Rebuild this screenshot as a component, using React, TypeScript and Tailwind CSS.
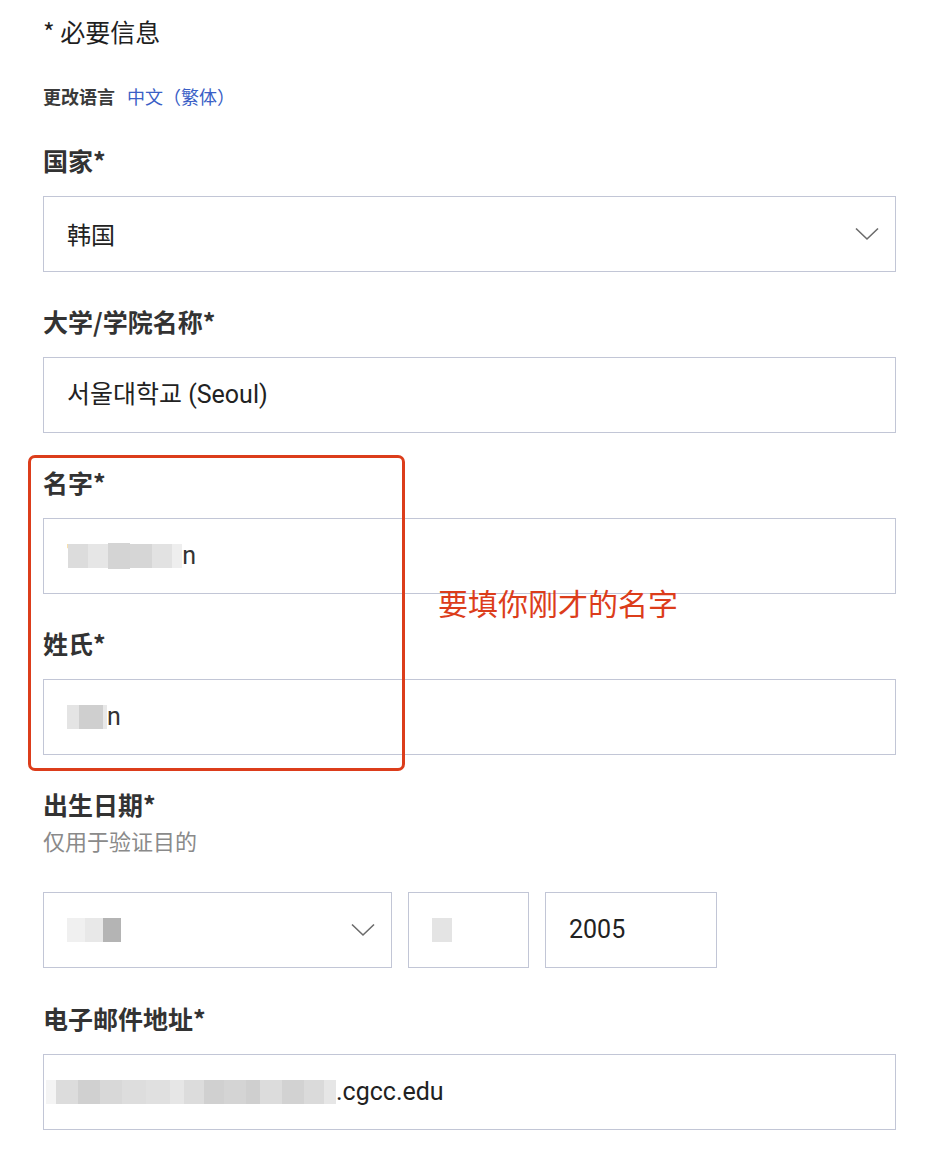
import React from "react";

const cjk = { fontFamily: "'Noto Sans CJK SC', 'Noto Sans', sans-serif" };
const latin = { fontFamily: "Roboto, 'Noto Sans CJK KR', 'Noto Sans CJK SC', sans-serif" };

function Chevron() {
  return (
    <svg width="24" height="14" viewBox="0 0 24 14" fill="none" className="shrink-0">
      <path d="M1 1.5 L12 12 L23 1.5" stroke="#6b6b6b" strokeWidth="1.6" />
    </svg>
  );
}

// pixelated privacy blur over personal values
function Blur({ blocks }: { blocks: { w: number; c: string; h?: number; y?: number }[] }) {
  return (
    <span className="inline-flex items-center blur-[0.6px]">
      {blocks.map((b, i) => (
        <span
          key={i}
          className="inline-block"
          style={{ width: b.w, height: b.h ?? 24, background: b.c, marginTop: b.y ?? 0 }}
        />
      ))}
    </span>
  );
}

function Label({ children }: { children: React.ReactNode }) {
  return (
    <div className="text-[25px] leading-[30px] font-bold text-[#333333] mb-[21px]" style={cjk}>
      {children}
    </div>
  );
}

function Box({
  children,
  className = "",
  chevron = false,
}: {
  children?: React.ReactNode;
  className?: string;
  chevron?: boolean;
}) {
  return (
    <div
      className={`h-[76px] border-[1.5px] border-[#c2c6d6] bg-white flex items-center pl-[23px] pr-[16px] text-[25px] text-[#222222] ${className}`}
      style={latin}
    >
      <div className="flex-1 flex items-center">{children}</div>
      {chevron && <Chevron />}
    </div>
  );
}

export default function App() {
  return (
    <div className="min-h-[1160px] bg-white pl-[43px] pr-[51px] pt-[15px]" style={cjk}>
      <div className="text-[25px] leading-[32px] text-[#1f1f1f]">* 必要信息</div>

      <div className="mt-[37px] text-[18px] leading-[24px]">
        <span className="font-bold text-[#3a3a3a]">更改语言</span>
        <span className="ml-[12px] text-[#3b5fc6]">中文（繁体）</span>
      </div>

      <div className="mt-[37px]">
        <Label>国家*</Label>
        <Box chevron>
          <span className="text-[24px]" style={cjk}>韩国</span>
        </Box>
      </div>

      <div className="mt-[34px]">
        <Label>大学/学院名称*</Label>
        <Box>서울대학교 (Seoul)</Box>
      </div>

      <div className="relative mt-[34px]">
        <Label>名字*</Label>
        <Box>
          <span className="text-[#444] text-[18px] -mr-[2px] -mt-[10px]">'</span>
          <Blur
            blocks={[
              { w: 20, c: "#dcdcdc" },
              { w: 20, c: "#e6e6e6" },
              { w: 22, c: "#d4d4d4", h: 26 },
              { w: 22, c: "#d6d6d6" },
              { w: 20, c: "#e2e2e2" },
              { w: 10, c: "#eeeeee" },
            ]}
          />
          <span className="text-[#333]">n</span>
        </Box>

        <div className="mt-[34px]">
          <Label>姓氏*</Label>
          <Box>
            <Blur
              blocks={[
                { w: 12, c: "#e4e4e4" },
                { w: 24, c: "#cfcfcf" },
                { w: 4, c: "#e8e8e8" },
              ]}
            />
            <span className="text-[#333]">n</span>
          </Box>
        </div>

        {/* callout */}
        <div className="absolute left-[-15px] top-[-12px] w-[377px] h-[316px] border-[3px] border-[#dc3d1b] rounded-[7px] pointer-events-none" />
        <div
          className="absolute left-[395px] top-[117px] text-[30px] leading-[36px] text-[#dc3d1b]"
          style={cjk}
        >
          要填你刚才的名字
        </div>
      </div>

      <div className="mt-[34px]">
        <div className="text-[25px] leading-[30px] font-bold text-[#333333]" style={cjk}>
          出生日期*
        </div>
        <div className="mt-[7px] text-[22px] leading-[28px] text-[#8a8a8a]" style={cjk}>
          仅用于验证目的
        </div>

        <div className="mt-[38px] flex gap-[16px]">
          <Box chevron className="w-[349px]">
            <Blur
              blocks={[
                { w: 18, c: "#f0f0f0" },
                { w: 18, c: "#e8e8e8" },
                { w: 18, c: "#b4b4b4" },
              ]}
            />
          </Box>
          <Box className="w-[121px]">
            <Blur blocks={[{ w: 20, c: "#e4e4e4" }]} />
          </Box>
          <Box className="w-[172px]">2005</Box>
        </div>
      </div>

      <div className="mt-[35px]">
        <Label>电子邮件地址*</Label>
        <Box className="!pl-[2px]">
          <Blur
            blocks={[
              { w: 10, c: "#f4f4f4" },
              { w: 22, c: "#dcdcdc" },
              { w: 22, c: "#d0d0d0" },
              { w: 22, c: "#d8d8d8" },
              { w: 24, c: "#dddddd" },
              { w: 24, c: "#e0e0e0" },
              { w: 14, c: "#e6e6e6" },
              { w: 20, c: "#dcdcdc" },
              { w: 20, c: "#d0d0d0" },
              { w: 22, c: "#d4d4d4" },
              { w: 14, c: "#cfcfcf" },
              { w: 22, c: "#dcdcdc" },
              { w: 22, c: "#d2d2d2" },
              { w: 20, c: "#dadada" },
              { w: 12, c: "#e6e6e6" },
            ]}
          />
          <span>.cgcc.edu</span>
        </Box>
      </div>
    </div>
  );
}
